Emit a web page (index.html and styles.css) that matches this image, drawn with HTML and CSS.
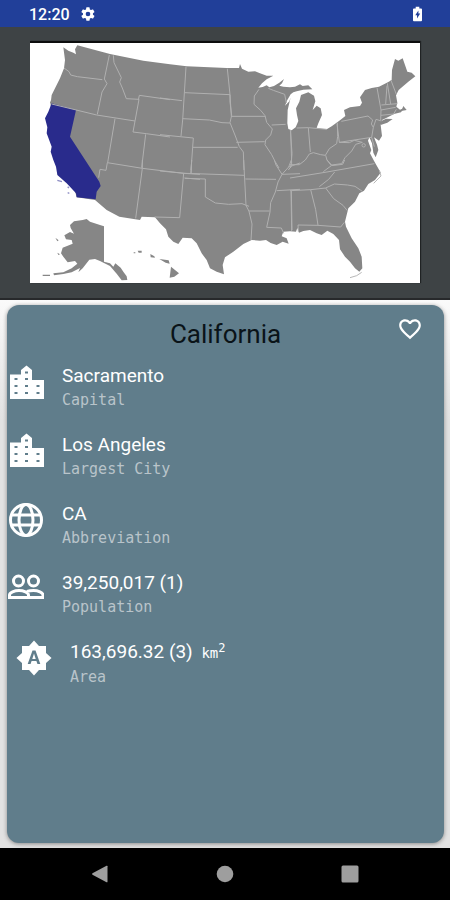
FILE: index.html
```html
<!DOCTYPE html>
<html lang="en">
<head>
<meta charset="utf-8">
<meta name="viewport" content="width=device-width, initial-scale=1">
<title>California</title>
<link rel="stylesheet" href="styles.css">
</head>
<body>
<header class="status">
  <span class="clock">12:20</span>
  <svg class="gear" viewBox="0 0 24 24" aria-hidden="true"><path fill-rule="evenodd" d="M19.4 13a7.500 7.500 0 0 0 0-2l2.100-1.600a.5.5 0 0 0 .1-.6l-2-3.500a.5.5 0 0 0-.6-.2l-2.500 1a7.300 7.300 0 0 0-1.700-1l-.4-2.600a.5.5 0 0 0-.5-.5h-4a.5.5 0 0 0-.5.5l-.4 2.600a7.300 7.300 0 0 0-1.700 1l-2.500-1a.5.5 0 0 0-.6.2l-2 3.500a.5.5 0 0 0 .1.6L4.500 11a7.500 7.500 0 0 0 0 2l-2.200 1.600a.5.5 0 0 0-.1.600l2 3.500c.1.200.4.300.6.200l2.500-1a7.300 7.300 0 0 0 1.700 1l.4 2.600c0 .3.200.5.500.5h4c.3 0 .5-.2.5-.5l.4-2.600a7.300 7.300 0 0 0 1.700-1l2.500 1c.2.100.5 0 .6-.2l2-3.500a.5.5 0 0 0-.1-.6zM12 15.500a3.500 3.500 0 1 1 0-7 3.500 3.500 0 0 1 0 7z"/></svg>
  <svg class="battery" viewBox="0 0 10 16" aria-hidden="true"><path fill-rule="evenodd" d="M3 0h4v2h2q1 0 1 1v12q0 1-1 1H1q-1 0-1-1V3q0-1 1-1h2zM6 4L2.500 9.500h2V13L8 7.500H6z"/></svg>
</header>

<section class="map-panel">
  <svg class="map" viewBox="90 129 1170 720" role="img" aria-label="Map of the United States with California highlighted">
    <path class="land" d="M190 142L205 152 220 158 228 163 225 148 232 136 330 162 430 182 510 193 560 199 680 204 717 204 720 192 726 206 745 215 765 214 780 220 800 227 820 227 800 238 786 250 775 263 788 261 800 256 808 262 822 258 838 248 852 237 846 250 838 257 850 260 870 262 885 260 900 253 908 258 925 256 937 268 910 269 890 274 880 277 872 283 862 300 855 317 868 304 872 292 863 330 862 370 865 387 875 391 887 382 895 363 891 345 888 325 898 305 903 285 925 277 942 287 946 304 938 330 950 317 962 325 966 345 955 370 950 383 965 386 980 388 995 379 1020 361 1036 348 1032 330 1050 322 1080 318 1086 308 1080 292 1095 270 1115 264 1137 260 1165 246 1175 240 1176 210 1185 177 1195 182 1208 175 1215 195 1222 215 1235 218 1246 229 1225 245 1210 258 1196 270 1188 286 1192 308 1189 320 1200 329 1212 324 1203 337 1182 342 1166 350 1146 360 1142 375 1146 408 1137 422 1122 412 1131 434 1135 450 1127 472 1120 458 1116 430 1108 412 1104 422 1114 450 1110 460 1121 481 1132 500 1142 518 1125 540 1105 552 1092 572 1078 580 1065 605 1045 625 1035 665 1038 680 1055 715 1075 745 1085 770 1087 805 1078 815 1065 805 1050 785 1035 770 1020 748 1017 720 1000 702 982 692 965 705 950 700 930 690 910 693 897 698 892 684 888 695 870 694 850 695 845 709 860 715 866 731 848 725 830 735 812 729 798 720 780 722 755 720 730 732 700 755 675 772 668 795 672 823 650 815 630 805 620 780 605 760 590 730 575 715 548 713 535 732 520 725 505 710 498 688 480 670 465 652 425 650 420 660 358 650 320 630 285 600 230 592 150 300 150 325 155 285 180 235 192 205 195 180Z"/>
    <path class="land" d="M1142 364L1158 356 1178 357 1162 368 1142 375ZM1210 318L1220 330 1204 333ZM210 675L222 664 248 660 260 657 270 665 300 675 312 679 312 785 330 790 340 800 346 790 362 803 370 815 380 829 382 840 365 841 350 821 330 798 300 783 285 777 268 779 258 792 248 805 235 817 240 804 215 817 190 822 162 826 160 820 190 817 215 805 232 791 225 783 203 787 190 770 183 760 188 743 218 731 215 720 198 718 193 706 210 696 222 701 212 684ZM128 824h22v4h-22zM166 713l10 8-4 3zM172 758l8 5-5 2zM413 752h12v6h-9zM401 757h5v3h-5zM451 762l12 7 2 4-13-1zM478 777l28 4 3 10-12-3zM513 800l24 20-14 10-14 3z"/>
    <path class="state" d="M155 310L228 330 210 410 275 510 298 545 302 558 290 575 287 598 230 592 228 580 200 550 172 525 168 500 160 480 152 455 155 440 140 400 142 382 135 355 145 335Z"/>
    <path class="isles" d="M172 541l14 4M203 560l4 4M203 578l5 2"/>
    <g class="border" transform="translate(90 120)">
      <path d="M102 84l15 11 5 10 20 5 75 9M238 45l-15 72 8 14-15 25-14 67M65 192l135 33 115 18M250 46l2 22 22 45-5 13 8 18 12 32 38 2-18 98 40 5 71 10M325 180l3-14 92 13M255 236l-22 132M347 283l-12 100"/>
    </g>
    <g class="border" transform="translate(90 480)">
      <path d="M232 8l-4 23-18-3-4 25M232 8l105 17 124 15M337 0v25l-20 150M461 40l-12 133-75-2M485 0l-2 40M461 40l49 3M463 54l47 4"/>
    </g>
    <g class="border" transform="translate(480 120)">
      <path d="M78 80l-10 160-5 48M74 158l136 6M202 86l8 78 4 65h102M68 236l80 4 38 8 24 1M0 174l66 8M0 284l100 10-7 96M99 322l134 0M210 164l0 22 5 40-5 22 16 40 12 32 12 16 2 54M229 307l85-2M297 148l-14 20-1 25 20 18 13 16 5 20 17 20-5 18-15 15-2 14 20 30 10 20 12 20M335 255l42-2M325 145l15 6 34 12 5 26M391 270l5 70-3 40-8 10"/>
    </g>
    <g class="border" transform="translate(480 480)">
      <path d="M0 33l75 7 178 6M75 55l61 2v54l30 18 40 4 40-2 21 8M95 0l-2 40M251 0l7 136 9 18 9 38-3 48M256 57l92 1M266 153h63M343 0l5 15 18 28-12 23-8 30-14 32-2 28-10 46 44 2 7 16M366 43l20-22 8-21M366 43l54-2M350 92l70-4M393 93l2 120M386 21l34-12"/>
    </g>
    <g class="border" transform="translate(870 120)">
      <path d="M20 264l35-1 55 5M2 270l3 100-4 14M55 264l6 72M0 374l28 0 18-14 12-18 12-4 22 6 14 2 12-20 22-15 3-22-1-41M141 251l7 56 97-15 5-30-6-10 4-12-14-12-80 16M107 346l4 14 14 15 30-4 10-18 20-20 12-20 20-6-24-6-15 7-30-1M245 292l8 28M250 262l8-24 16 5M272 240l1-30-12-67M273 210l44-8M273 226l38-4 8-14M287 192l4-55M302 192l-10-62M303 121l16 42M274 195l48-4"/>
      <circle cx="221" cy="316" r="5"/>
    </g>
    <g class="border" transform="translate(870 480)">
      <path d="M0 54l105-17 148-26M0 92l62-3 45-5 26-12 40 3 22 4 22 15M134 36l-18 22-28 22M62 89l15 60 7 47-60-1 1 20M84 196l68 5 11-14M107 84l24 32 28 20 13 16M4 92l2 118M100 35l24-18 34-4 6-13M124 17l-14-18"/>
    </g>
    <path class="keys" d="M1050 833l20-6 15-10M1138 510l5 18-22 22"/>
  </svg>
</section>

<main class="content">
  <article class="card">
    <div class="card-head">
      <h1 class="title">California</h1>
      <button class="fav" type="button" aria-label="Favorite"><svg viewBox="0 0 24 24"><path d="M16.500 3c-1.740 0-3.410.81-4.500 2.090C10.910 3.810 9.240 3 7.500 3 4.420 3 2 5.420 2 8.500c0 3.780 3.400 6.860 8.550 11.540L12 21.350l1.450-1.320C18.600 15.360 22 12.280 22 8.500 22 5.420 19.580 3 16.500 3zm-4.400 15.550l-.1.100-.1-.1C7.140 14.240 4 11.390 4 8.500 4 6.500 5.500 5 7.500 5c1.540 0 3.040.99 3.570 2.360h1.870C13.460 5.990 14.960 5 16.500 5c2 0 3.500 1.500 3.500 3.500 0 2.890-3.140 5.740-7.900 10.050z"/></svg></button>
    </div>
    <ul class="facts">
      <li class="fact">
        <svg class="icon" viewBox="0 0 36 36" aria-hidden="true"><path fill-rule="evenodd" d="M2 10.500h11V6l5.500-4.500L24 6v10h12v19H2zM6.500 14v2h3v-2zM6.500 21v2h3v-2zM6.500 28v2h3v-2zM17 7.500v2h3v-2zM17 14v2h3v-2zM17 21v2h3v-2zM17 28v2h3v-2zM28.500 21v2h3v-2zM28.500 28v2h3v-2z"/></svg>
        <div><p class="value">Sacramento</p><p class="label">Capital</p></div>
      </li>
      <li class="fact">
        <svg class="icon" viewBox="0 0 36 36" aria-hidden="true"><path fill-rule="evenodd" d="M2 9.500h11V5L18.500.5 24 5v10h12v19H2zM6.500 13v2h3v-2zM6.500 20v2h3v-2zM6.500 27v2h3v-2zM17 6.500v2h3v-2zM17 13v2h3v-2zM17 20v2h3v-2zM17 27v2h3v-2zM28.500 20v2h3v-2zM28.500 27v2h3v-2z"/></svg>
        <div><p class="value">Los Angeles</p><p class="label">Largest City</p></div>
      </li>
      <li class="fact">
        <svg class="icon line" viewBox="0 0 36 36" aria-hidden="true"><circle cx="18" cy="18" r="15.500"/><ellipse cx="18" cy="18" rx="7" ry="15.500"/><path d="M4 13h28M4 23h28"/></svg>
        <div><p class="value">CA</p><p class="label">Abbreviation</p></div>
      </li>
      <li class="fact">
        <svg class="icon line" viewBox="0 0 36 36" aria-hidden="true"><circle cx="10.500" cy="10" r="5"/><circle cx="25.500" cy="10" r="5"/><path d="M1.500 26.500V24c0-2.500 5-4.500 9.500-4.500s9.500 2 9.500 4.500v2.500zM19 20.500c2-.7 4.500-1 6.500-1 4.500 0 9.500 2 9.500 4.500v2.500H21"/></svg>
        <div><p class="value">39,250,017 (1)</p><p class="label">Population</p></div>
      </li>
      <li class="fact inset">
        <svg class="icon" viewBox="0 0 24 24" aria-hidden="true"><path fill-rule="evenodd" d="M10.850 12.650h2.300L12 9l-1.150 3.650zM20 8.690V4h-4.690L12 .3 8.690 4H4v4.690L.3 12 4 15.310V20h4.690L12 23.700 15.310 20H20v-4.690L23.700 12 20 8.690zM14.300 16l-.7-2h-3.200l-.7 2H7.800L11 7h2l3.200 9h-1.900z"/></svg>
        <div><p class="value">163,696.32 (3) <span class="unit">km<sup>2</sup></span></p><p class="label">Area</p></div>
      </li>
    </ul>
  </article>
</main>

<nav class="navbar" aria-label="System">
  <button type="button" aria-label="Back"><svg viewBox="0 0 18 18"><path d="M1.500 8.300L15.500.8q1-.5 1 .5v15.400q0 1-1 .5L1.500 9.700q-1-.7 0-1.400z"/></svg></button>
  <button type="button" aria-label="Home"><svg viewBox="0 0 18 18"><circle cx="9" cy="9" r="8.300"/></svg></button>
  <button type="button" aria-label="Recent apps"><svg viewBox="0 0 18 18"><rect x=".5" y=".5" width="17" height="17" rx="1.500"/></svg></button>
</nav>
</body>
</html>
```
FILE: styles.css
```css
* {
  box-sizing: border-box;
}

body {
  margin: 0;
  min-height: 100vh;
  display: flex;
  flex-direction: column;
  background: #e4e4e4;
  font-family: Roboto, sans-serif;
}

h1, p, ul {
  margin: 0;
  padding: 0;
}

svg {
  display: block;
}

button {
  padding: 0;
  border: 0;
  background: none;
}

.status {
  display: flex;
  align-items: center;
  gap: 10px;
  height: 27px;
  padding: 1px 28px 0 29px;
  background: #213f99;
  color: #fff;
  fill: #fff;
}

.clock {
  font-size: 16px;
  font-weight: 500;
}

.gear {
  width: 16px;
  height: 16px;
}

.battery {
  width: 9px;
  height: 16px;
  margin-left: auto;
}

.map-panel {
  padding: 14px 30px 15px;
  background: #3e4345;
  border-bottom: 2px solid #27292b;
}

.map {
  width: 100%;
  background: #fff;
  border-top: 2px solid #0c0d0d;
  box-shadow: 1px 0 1px #202324;
}

.land {
  fill: #868686;
}

.state {
  fill: #292b8c;
}

.border {
  fill: none;
  stroke: #b0b0b0;
  stroke-width: 3;
}

.isles {
  fill: none;
  stroke: #8d8dc4;
  stroke-width: 4;
}

.keys {
  fill: none;
  stroke: #b8b8b8;
  stroke-width: 3;
}

.content {
  flex: 1;
  display: flex;
  padding: 5px 6px 5px 7px;
  background: linear-gradient(#fafafa, #e2e2e2 120px);
}

.card {
  flex: 1;
  border-radius: 12px;
  background: #607d8b;
  box-shadow: 0 1px 4px #8a8a8a;
}

.card-head {
  display: grid;
  grid-template-columns: 48px 1fr 48px;
  align-items: start;
  padding: 11px 10px 0;
}

.title {
  grid-column: 2;
  font-size: 26px;
  line-height: 36px;
  font-weight: 400;
  text-align: center;
  color: #0a1318;
}

.fav {
  justify-self: center;
}

.fav svg {
  width: 26px;
  height: 26px;
  fill: #fff;
}

.facts {
  list-style: none;
  padding: 12px 0 0 1px;
}

.fact {
  display: flex;
  gap: 18px;
  height: 69px;
}

.inset {
  padding-left: 8px;
}

.icon {
  width: 36px;
  height: 36px;
  fill: #fff;
}

.line {
  fill: none;
  stroke: #fff;
  stroke-width: 3;
}

.value {
  font-size: 19px;
  line-height: 24px;
  color: #fff;
}

.label {
  font-family: "DejaVu Sans Mono", monospace;
  font-size: 15px;
  line-height: 24px;
  color: #b9c4ca;
}

.unit {
  margin-left: 4px;
  font-family: "DejaVu Sans Mono", monospace;
  font-size: 14px;
}

.unit sup {
  font-size: 12px;
  line-height: 0;
}

.navbar {
  display: flex;
  justify-content: space-evenly;
  align-items: center;
  height: 52px;
  padding: 0 38px;
  background: #000;
}

.navbar button {
  flex: 1;
  display: flex;
  justify-content: center;
}

.navbar svg {
  width: 18px;
  height: 18px;
  fill: #9e9e9e;
}
```
